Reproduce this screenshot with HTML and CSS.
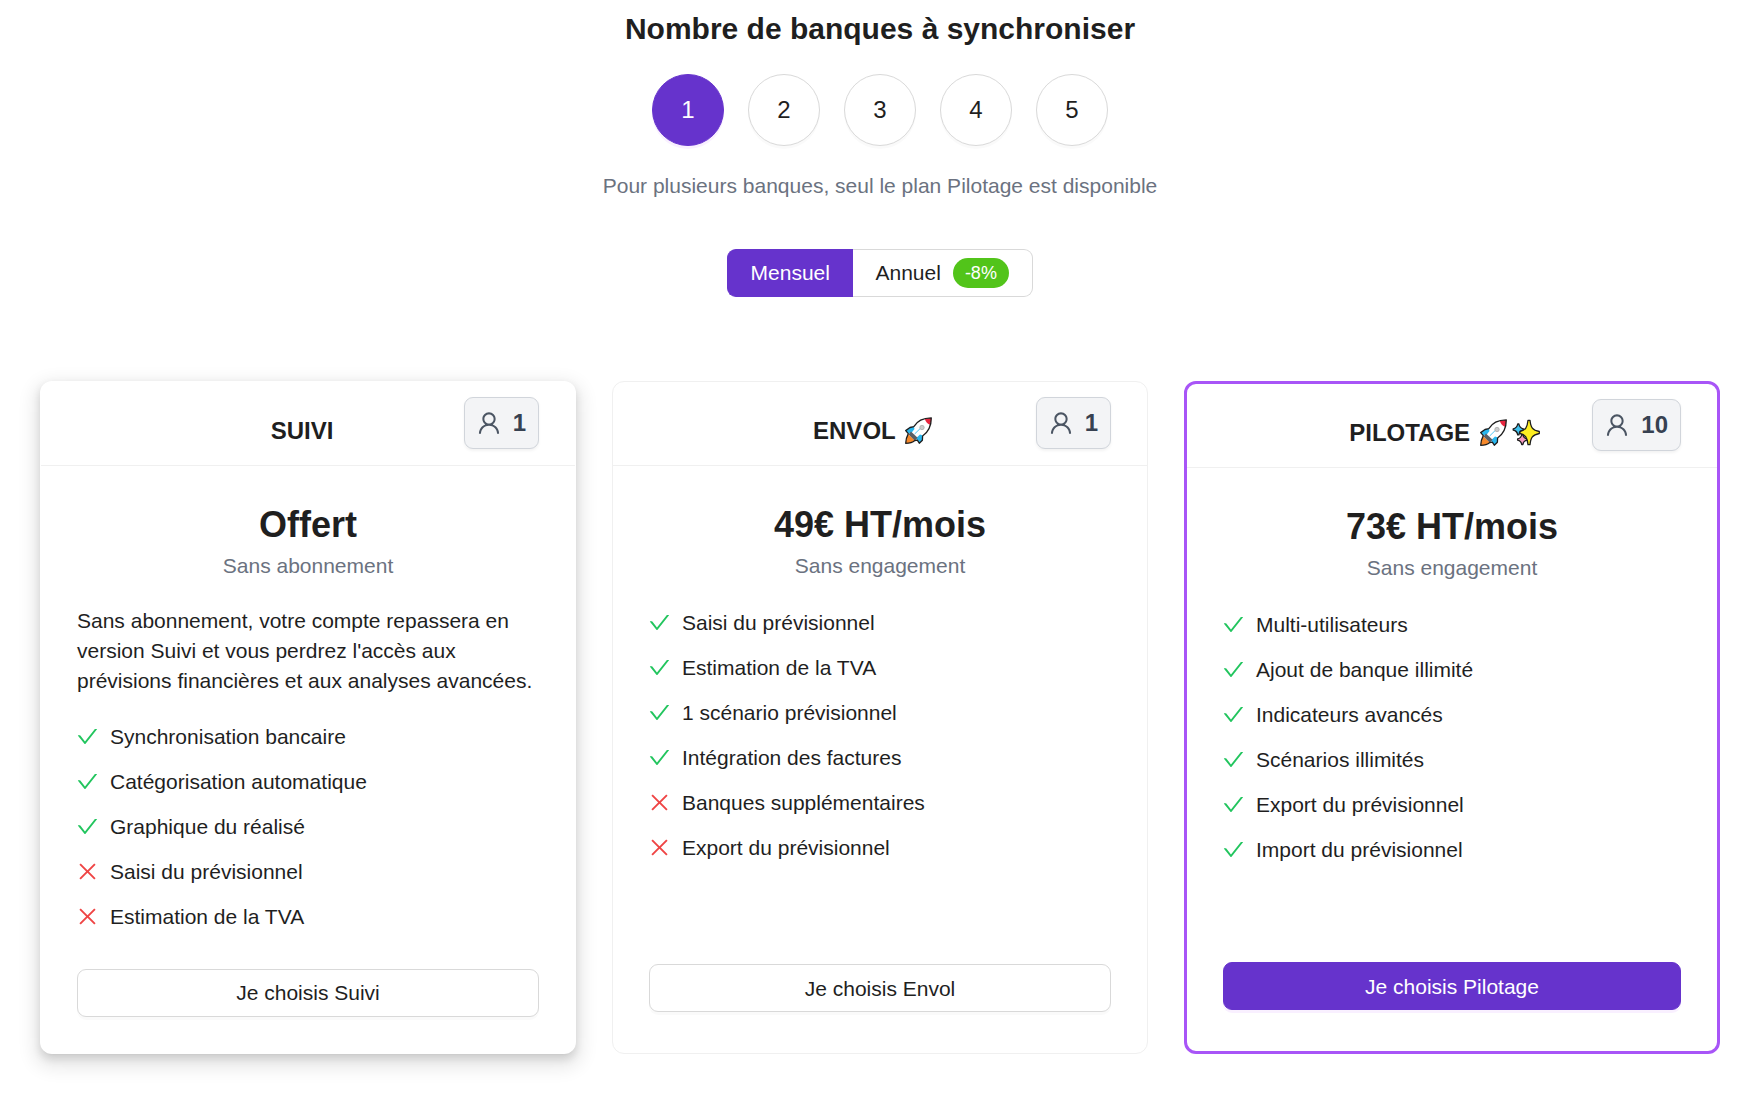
FILE: index.html
```html
<!DOCTYPE html>
<html lang="fr">
<head>
<meta charset="utf-8">
<title>Nombre de banques à synchroniser</title>
<link rel="stylesheet" href="styles.css">
</head>
<body>
<svg class="sprite" aria-hidden="true">
  <symbol id="check" viewBox="64 64 896 896"><path fill="currentColor" d="M912 190h-69.9c-9.8 0-19.1 4.5-25.1 12.2L404.7 724.5 207 474a32 32 0 00-25.1-12.2H112c-6.7 0-10.4 7.7-6.3 12.9l273.9 347c12.8 16.2 37.4 16.2 50.3 0l488.4-618.9c4.1-5.1.4-12.8-6.3-12.8z"/></symbol>
  <symbol id="close" viewBox="64 64 896 896"><path fill="currentColor" d="M799.9 166.3l57.8 57.8L569.9 512l287.8 287.8-57.8 57.9L512 569.9 224.2 857.7l-57.9-57.9L454.1 512 166.3 224.2l57.9-57.9L512 454.1z"/></symbol>
  <symbol id="user" viewBox="64 64 896 896"><path fill="currentColor" d="M858.5 763.6a374 374 0 00-80.6-119.5 375.63 375.63 0 00-119.5-80.6c-.4-.2-.8-.3-1.2-.5C719.5 518 760 444.7 760 362c0-137-111-248-248-248S264 225 264 362c0 82.7 40.5 156 102.8 201.1-.4.2-.8.3-1.2.5-44.8 18.9-85 46-119.5 80.6a375.63 375.63 0 00-80.6 119.5A371.7 371.7 0 00136 901.8a8 8 0 008 8.2h60c4.4 0 7.9-3.5 8-7.8 2-77.2 33-149.5 87.8-204.3 56.7-56.7 132-87.9 212.2-87.9s155.5 31.2 212.2 87.9C779 752.7 810 825 812 902.2c.1 4.4 3.6 7.8 8 7.8h60a8 8 0 008-8.2c-1-47.8-10.9-94.3-29.5-138.2zM512 534c-45.9 0-89.1-17.9-121.6-50.4S340 407.9 340 362c0-45.9 17.9-89.1 50.4-121.6S466.1 190 512 190s89.1 17.9 121.6 50.4S684 316.1 684 362c0 45.9-17.9 89.1-50.4 121.6S557.9 534 512 534z"/></symbol>
  <symbol id="rocket" viewBox="0 0 33 27">
    <path fill="#f7892b" d="M6.200 17.200C4.500 20 3.900 22.800 3.800 26.200 7.200 26.200 10.500 25.600 12.800 23.200z"/>
    <path fill="#fff" d="M29.300.9C21.500 1 15.500 3.500 11.800 9.200L7.200 16.800 13.400 23 20.600 19C27 14.600 29.300 8 29.300.9z"/>
    <path fill="#28b6ee" d="M11.800 9.800L8 10.600 3.800 13.600 6 15.900 8.800 16.800 12.500 12zM13.800 21.600L15.500 23.600 17.300 26 20.300 23.200 20.300 18.200 18 17.500z"/>
    <path fill="#e8253f" d="M29.300.9C27 .9 24.800 1.300 22.800 2Q24.300 6.600 28.200 7.800C29 5.500 29.300 3.200 29.300.9z"/>
    <path fill="#5a5f66" d="M9 14.400L6.600 17.400 12.800 23.400 15.600 20.800z"/>
    <path stroke="#4cc4f0" stroke-width="1" d="M12.600 17L18 11.700"/>
    <circle cx="20" cy="10.500" r="2.200" fill="#ccc" stroke="#a5a5a5" stroke-width=".7"/>
    <path fill="none" stroke="#1d1d1d" stroke-width="1.300" stroke-linejoin="round" d="M29.300.8C21.500.9 15.500 3.200 11.800 9.600L8 10.500 3.700 13.600 6.300 16.600C4.500 20 3.800 22.800 3.700 26.300 7 26.300 10.500 25.600 12.900 23.500L15.300 23.200 17.300 26.200 20.400 23.200 20.600 19C27 14.600 29.300 8 29.300.8z"/>
  </symbol>
  <symbol id="sparkles" viewBox="0 0 33 27">
    <g stroke="#1d1d1d" stroke-width="1.300" stroke-linejoin="round">
      <path fill="#3fc1ef" d="M7.700 5h1.200Q9.500 9 13.400 9.800v1.200Q9.500 11.800 8.900 15.800H7.700Q7.100 11.800 3.200 11V9.800Q7.100 9 7.700 5z"/>
      <path fill="#f79ac0" d="M11.700 15.500h1.200Q13.400 19.200 17 19.900v1.200Q13.400 21.800 12.900 25.500H11.700Q11.200 21.800 7.600 21.100V19.900Q11.200 19.200 11.700 15.500z"/>
      <path fill="#fdee21" d="M18 1.300h2C20.700 8.500 22.500 11 29.300 12.500v2C22.500 16 20.700 18.500 20 25.700h-2C17.300 18.500 15.500 16 10 14.500v-2C15.500 11 17.300 8.500 18 1.300z"/>
    </g>
  </symbol>
</svg>

<main class="page">
  <h1 class="heading">Nombre de banques à synchroniser</h1>
  <div class="banks">
    <button class="bank bank-active">1</button>
    <button class="bank">2</button>
    <button class="bank">3</button>
    <button class="bank">4</button>
    <button class="bank">5</button>
  </div>
  <p class="hint">Pour plusieurs banques, seul le plan Pilotage est disponible</p>
  <div class="period">
    <button class="period-option period-active">Mensuel</button>
    <button class="period-option">Annuel <span class="discount">-8%</span></button>
  </div>

  <section class="plans">
    <article class="card card-raised">
      <header class="card-head">
        <h2 class="card-title">SUIVI</h2>
        <span class="seats"><svg class="seats-icon"><use href="#user"/></svg>1</span>
      </header>
      <div class="card-body">
        <div class="price">Offert</div>
        <div class="terms">Sans abonnement</div>
        <p class="note">Sans abonnement, votre compte repassera en version Suivi et vous perdrez l'accès aux prévisions financières et aux analyses avancées.</p>
        <ul class="features">
          <li class="feature"><svg class="icon yes"><use href="#check"/></svg>Synchronisation bancaire</li>
          <li class="feature"><svg class="icon yes"><use href="#check"/></svg>Catégorisation automatique</li>
          <li class="feature"><svg class="icon yes"><use href="#check"/></svg>Graphique du réalisé</li>
          <li class="feature"><svg class="icon no"><use href="#close"/></svg>Saisi du prévisionnel</li>
          <li class="feature"><svg class="icon no"><use href="#close"/></svg>Estimation de la TVA</li>
        </ul>
        <button class="choose">Je choisis Suivi</button>
      </div>
    </article>

    <article class="card">
      <header class="card-head">
        <h2 class="card-title">ENVOL <svg class="emoji"><use href="#rocket"/></svg></h2>
        <span class="seats"><svg class="seats-icon"><use href="#user"/></svg>1</span>
      </header>
      <div class="card-body body-envol">
        <div class="price">49€ HT/mois</div>
        <div class="terms">Sans engagement</div>
        <ul class="features">
          <li class="feature"><svg class="icon yes"><use href="#check"/></svg>Saisi du prévisionnel</li>
          <li class="feature"><svg class="icon yes"><use href="#check"/></svg>Estimation de la TVA</li>
          <li class="feature"><svg class="icon yes"><use href="#check"/></svg>1 scénario prévisionnel</li>
          <li class="feature"><svg class="icon yes"><use href="#check"/></svg>Intégration des factures</li>
          <li class="feature"><svg class="icon no"><use href="#close"/></svg>Banques supplémentaires</li>
          <li class="feature"><svg class="icon no"><use href="#close"/></svg>Export du prévisionnel</li>
        </ul>
        <button class="choose">Je choisis Envol</button>
      </div>
    </article>

    <article class="card card-featured">
      <header class="card-head">
        <h2 class="card-title">PILOTAGE <svg class="emoji"><use href="#rocket"/></svg><svg class="emoji"><use href="#sparkles"/></svg></h2>
        <span class="seats"><svg class="seats-icon"><use href="#user"/></svg>10</span>
      </header>
      <div class="card-body body-pilotage">
        <div class="price">73€ HT/mois</div>
        <div class="terms">Sans engagement</div>
        <ul class="features">
          <li class="feature"><svg class="icon yes"><use href="#check"/></svg>Multi-utilisateurs</li>
          <li class="feature"><svg class="icon yes"><use href="#check"/></svg>Ajout de banque illimité</li>
          <li class="feature"><svg class="icon yes"><use href="#check"/></svg>Indicateurs avancés</li>
          <li class="feature"><svg class="icon yes"><use href="#check"/></svg>Scénarios illimités</li>
          <li class="feature"><svg class="icon yes"><use href="#check"/></svg>Export du prévisionnel</li>
          <li class="feature"><svg class="icon yes"><use href="#check"/></svg>Import du prévisionnel</li>
        </ul>
        <button class="choose choose-primary">Je choisis Pilotage</button>
      </div>
    </article>
  </section>
</main>
</body>
</html>
```
FILE: styles.css
```css
* { box-sizing: border-box; }

body {
  margin: 0;
  background: #fff;
  color: #1f1f1f;
  font: 21px/33px "Liberation Sans", Arial, sans-serif;
}

h1, h2, p, ul { margin: 0; padding: 0; }

button {
  font: inherit;
  color: inherit;
  padding: 0;
  margin: 0;
}

.sprite { display: none; }

.page {
  width: 1680px;
  min-height: 1098px;
  margin: 0 36px 0 40px;
  padding-top: 8px;
  display: flex;
  flex-direction: column;
  align-items: center;
}

.heading {
  font-size: 30px;
  line-height: 42px;
  font-weight: 600;
}

.banks {
  display: flex;
  gap: 24px;
  margin-top: 24px;
}

.bank {
  width: 72px;
  height: 72px;
  padding-bottom: 2px;
  border: 1px solid #d9d9d9;
  border-radius: 50%;
  background: #fff;
  font-size: 24px;
  box-shadow: 0 3px 0 rgba(0, 0, 0, .02);
}

.bank-active {
  background: #6633cc;
  border-color: #6633cc;
  color: #fff;
  box-shadow: 0 3px 0 rgba(145, 5, 255, .06);
}

.hint {
  margin-top: 23px;
  color: #6b7280;
}

.period {
  display: flex;
  margin-top: 47px;
}

.period-option {
  display: flex;
  align-items: center;
  gap: 12px;
  height: 48px;
  padding: 0 23.5px 1px 22.5px;
  border: 1px solid #d9d9d9;
  border-left: 0;
  border-radius: 0 9px 9px 0;
  background: #fff;
}

.period-active {
  padding: 0 23px 2px;
  border: 1px solid #6633cc;
  border-right: 0;
  border-radius: 9px 0 0 9px;
  background: #6633cc;
  color: #fff;
}

.discount {
  height: 30px;
  padding: 0 12px;
  border-radius: 15px;
  background: #52c41a;
  color: #fff;
  font-size: 18px;
  line-height: 30px;
}

.plans {
  align-self: stretch;
  display: grid;
  grid-template-columns: repeat(3, 1fr);
  gap: 36px;
  margin-top: 84px;
}

.card {
  height: 673px;
  border: 1px solid #f0f0f0;
  border-radius: 12px;
  background: #fff;
}

.card-raised {
  border-color: transparent;
  box-shadow: 0 1.5px 3px -3px rgba(0, 0, 0, .16), 0 4.5px 9px rgba(0, 0, 0, .12), 0 7.5px 18px 6px rgba(0, 0, 0, .09);
}

.card-featured { border: 3px solid #a855f7; }

.card-head {
  display: grid;
  height: 84px;
  padding: 0 36px;
  border-bottom: 1px solid #f0f0f0;
}

.card-title,
.seats { grid-area: 1 / 1; }

.card-title {
  padding: 31px 12px 0 0;
  font-size: 24px;
  line-height: 36px;
  font-weight: 600;
  text-align: center;
  white-space: nowrap;
}

.emoji {
  width: 33px;
  height: 27px;
  vertical-align: -5px;
}

.seats {
  justify-self: end;
  align-self: start;
  display: flex;
  align-items: center;
  gap: 12px;
  height: 52px;
  margin-top: 15px;
  padding: 0 12px 1px;
  border: 1px solid #d1d5db;
  border-radius: 9px;
  background: #f3f4f6;
  box-shadow: 0 1.5px 3px rgba(0, 0, 0, .05);
  color: #374151;
  font-size: 24px;
  font-weight: 600;
}

.seats-icon {
  width: 24px;
  height: 24px;
  color: #4b5563;
}

.card-body {
  display: flex;
  flex-direction: column;
  padding: 36px;
}

.price {
  font-size: 36px;
  line-height: 45px;
  font-weight: 600;
  text-align: center;
}

.terms {
  margin-top: 4px;
  line-height: 30px;
  color: #6b7280;
  text-align: center;
}

.note {
  margin-top: 25px;
  line-height: 30px;
}

.features {
  display: flex;
  flex-direction: column;
  gap: 12px;
  margin: 25px 0 36px;
  list-style: none;
}

.note + .features { margin-top: 24px; }
.body-envol .features { margin-bottom: 100px; }
.body-pilotage .features { margin-bottom: 96px; }

.feature {
  display: flex;
  align-items: center;
  gap: 12px;
}

.icon {
  width: 21px;
  height: 21px;
}

.yes { color: #22c55e; }
.no { color: #ef4444; }

.choose {
  height: 48px;
  border: 1px solid #d9d9d9;
  border-radius: 9px;
  background: #fff;
  box-shadow: 0 3px 0 rgba(0, 0, 0, .02);
}

.card-raised .choose { padding-bottom: 2px; }

.choose-primary {
  border-color: #6633cc;
  background: #6633cc;
  color: #fff;
  box-shadow: 0 3px 0 rgba(145, 5, 255, .06);
}
```
